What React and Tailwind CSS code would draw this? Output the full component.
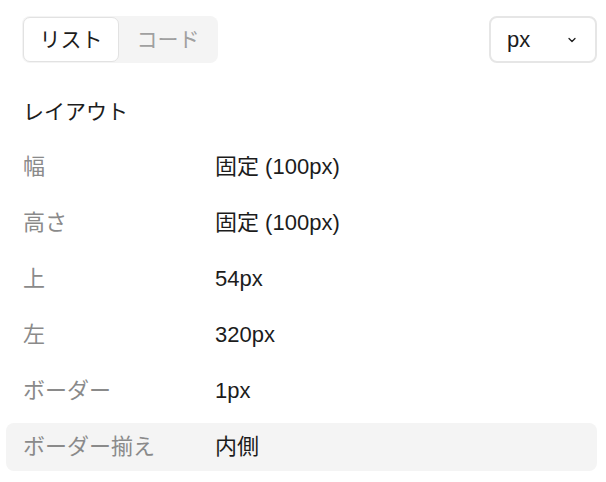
// App.jsx — パネル: レイアウトプロパティ一覧

import { ChevronDown } from 'lucide-react'

const ROWS = [
  { label: '幅',           value: '固定 (100px)' },
  { label: '高さ',         value: '固定 (100px)' },
  { label: '上',           value: '54px' },
  { label: '左',           value: '320px' },
  { label: 'ボーダー',     value: '1px' },
  { label: 'ボーダー揃え', value: '内側', active: true },
]

function Row({ label, value, active }) {
  return (
    <div className={`flex items-center h-12 px-[17px] rounded-lg ${active ? 'bg-[#f4f4f4]' : ''}`}>
      <span className="w-[192px] text-[#8a8a8a]">{label}</span>
      <span className="text-[#1c1c1c]">{value}</span>
    </div>
  )
}

export default function App() {
  return (
    <div
      className="w-[606px] h-[482px] bg-white pl-[6px] pr-[9px] pt-4 text-[21px] leading-none"
      style={{ fontFamily: '"Liberation Sans", "Noto Sans CJK JP", sans-serif' }}
    >
      {/* ── ツールバー ── */}
      <div className="flex items-center justify-between pl-4">
        <div className="flex p-px h-[47px] rounded-lg bg-[#f4f4f4]">
          <button className="w-[96px] rounded-[7px] bg-white border border-[#e2e2e2] text-[#1c1c1c]">リスト</button>
          <button className="w-[98px] text-[#a0a0a0]">コード</button>
        </div>
        <div className="flex items-center justify-between w-[108px] h-[47px] pl-4 pr-[17px] rounded-lg border-2 border-[#e6e6e6] text-[#1c1c1c]">
          <span className="text-[22px]">px</span>
          <ChevronDown size={12} strokeWidth={2.5} />
        </div>
      </div>

      {/* ── レイアウト ── */}
      <div className="flex items-center h-12 mt-6 px-[17px] text-[#1c1c1c]">レイアウト</div>

      <div className="flex flex-col gap-2 mt-2 text-[22px]">
        {ROWS.map(r => <Row key={r.label} {...r} />)}
      </div>
    </div>
  )
}
